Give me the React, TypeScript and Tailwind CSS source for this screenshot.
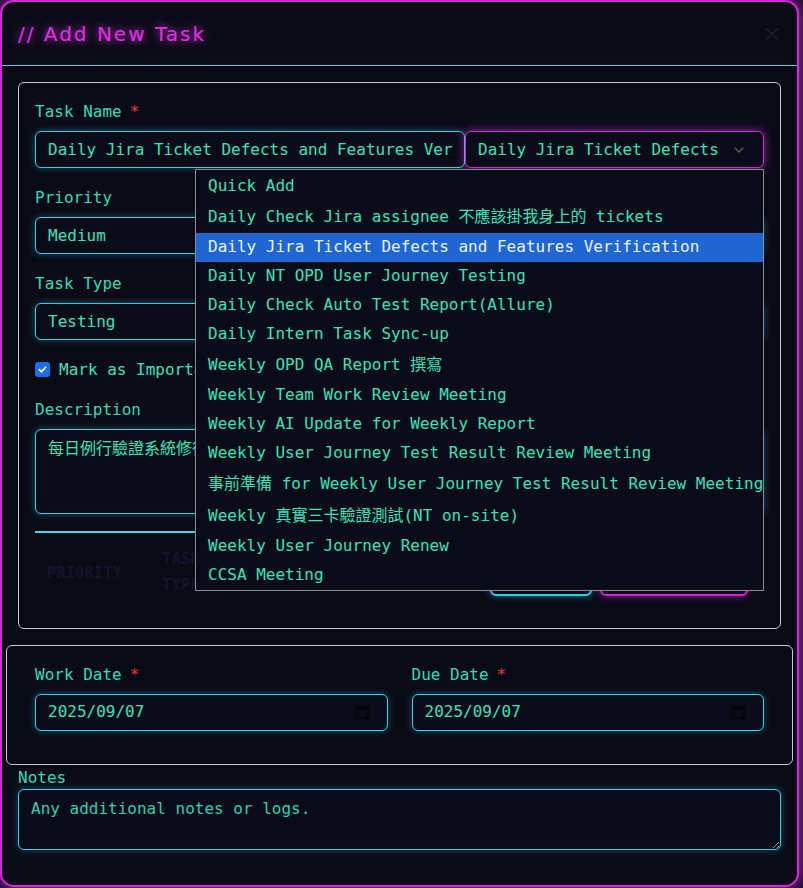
import { ChevronDown, X } from 'lucide-react';

const MONO = { fontFamily: '"DejaVu Sans Mono", "Noto Sans CJK TC", monospace' };

// Latin rows sit at 29px; rows with CJK pick up the taller fallback metrics.
const OPTIONS: { label: string; cjk?: boolean; active?: boolean }[] = [
  { label: 'Quick Add' },
  { label: 'Daily Check Jira assignee 不應該掛我身上的 tickets', cjk: true },
  { label: 'Daily Jira Ticket Defects and Features Verification', active: true },
  { label: 'Daily NT OPD User Journey Testing' },
  { label: 'Daily Check Auto Test Report(Allure)' },
  { label: 'Daily Intern Task Sync-up' },
  { label: 'Weekly OPD QA Report 撰寫', cjk: true },
  { label: 'Weekly Team Work Review Meeting' },
  { label: 'Weekly AI Update for Weekly Report' },
  { label: 'Weekly User Journey Test Result Review Meeting' },
  { label: '事前準備 for Weekly User Journey Test Result Review Meeting', cjk: true },
  { label: 'Weekly 真實三卡驗證測試(NT on-site)', cjk: true },
  { label: 'Weekly User Journey Renew' },
  { label: 'CCSA Meeting' },
];

function Label({ children, required }: { children: React.ReactNode; required?: boolean }) {
  return (
    <div className="mb-2 pt-[1px] text-[16px] leading-[23px] text-[#30dcb4]">
      {children}
      {required && <span className="ml-2 text-[#e0384c]">*</span>}
    </div>
  );
}

const field =
  'h-[37px] rounded-md border border-[#2fd2de] bg-[#0a0b18] px-[12px] text-[16px] text-[#38e3b6] shadow-[0_0_7px_rgba(34,211,238,0.35)]';

function CalendarGlyph() {
  return (
    <svg width="14" height="14" viewBox="0 0 14 14" fill="none" className="text-[#04050a]">
      <rect x="1" y="2" width="12" height="11" rx="1" stroke="currentColor" strokeWidth="1.8" />
      <rect x="1" y="2" width="12" height="3" fill="currentColor" />
    </svg>
  );
}

function DateField({ label, value }: { label: string; value: string }) {
  return (
    <div>
      <Label required>{label}</Label>
      <div className={`${field} flex items-center justify-between pr-[18px]`}>
        <span>{value}</span>
        <CalendarGlyph />
      </div>
    </div>
  );
}

function TaskOptions() {
  return (
    <div className="absolute left-[160px] right-0 top-[38px] z-10 border border-[#8a8a90] bg-[#0a0b18] pt-[1.5px]">
      {OPTIONS.map((option) => (
        <div
          key={option.label}
          className={`flex items-center whitespace-nowrap px-[12px] text-[16px] ${
            option.cjk ? 'h-[32px]' : 'h-[29px]'
          } ${option.active ? 'bg-[#1f66d2] text-[#eaf4ff]' : 'text-[#38e3b6]'}`}
        >
          {option.label}
        </div>
      ))}
    </div>
  );
}

export default function App() {
  return (
    <div className="h-[888px] w-[803px] overflow-hidden bg-[#180b2a]" style={MONO}>
      <div className="flex h-[887px] w-[799px] flex-col rounded-[14px] border-2 border-[#dc22de] bg-[#0a0a17] shadow-[0_0_14px_rgba(217,70,239,0.75)]">
        <header className="flex h-[63px] shrink-0 items-center justify-between pl-4 pr-[15px]">
          <h2
            className="text-[20px] tracking-[2px] text-[#e22ee4] [text-shadow:0_0_8px_rgba(236,72,236,0.9)]"
            style={{ fontFamily: '"DejaVu Sans", sans-serif' }}
          >
            // Add New Task
          </h2>
          <X size={20} strokeWidth={1.5} className="text-[#20202c]" />
        </header>
        <div className="h-px shrink-0 bg-[#3cd9e6]" />

        <div className="flex flex-col p-4">
          <section className="rounded-md border border-[#c9c9d2] p-4">
            <div className="mb-[17px]">
              <Label required>Task Name</Label>
              <div className="relative flex">
                <div className={`${field} flex w-[430px] shrink-0 items-center pr-[10px]`}>
                  <span className="overflow-hidden whitespace-nowrap">
                    Daily Jira Ticket Defects and Features Verification
                  </span>
                </div>
                <div className="flex h-[37px] flex-1 items-center justify-between rounded-md border border-[#d81fd8] bg-[#0a0b18] pl-[12px] pr-[16px] text-[16px] text-[#38e3b6] shadow-[0_0_10px_rgba(217,70,239,0.6)]">
                  <span>Daily Jira Ticket Defects</span>
                  <ChevronDown size={16} className="text-[#5a5a66]" />
                </div>
                <TaskOptions />
              </div>
            </div>

            <div className="mb-[17px]">
              <Label>Priority</Label>
              <div className={`${field} flex items-center justify-between pr-[16px]`}>
                <span>Medium</span>
                <ChevronDown size={16} className="text-[#5a5a66]" />
              </div>
            </div>

            <div className="mb-[17px]">
              <Label>Task Type</Label>
              <div className={`${field} flex items-center`}>Testing</div>
            </div>

            <label className="mb-[16px] flex h-6 items-center gap-[9px] pt-[1px] text-[16px] text-[#38e3b6]">
              <span className="flex h-[15px] w-[15px] items-center justify-center rounded-[3px] bg-[#1a6fe6]">
                <svg width="11" height="11" viewBox="0 0 12 12" fill="none">
                  <path d="M2.5 6.2l2.3 2.3 4.7-4.9" stroke="white" strokeWidth="1.8" strokeLinecap="round" strokeLinejoin="round" />
                </svg>
              </span>
              Mark as Important
            </label>

            <div className="mb-[17px]">
              <Label>Description</Label>
              <textarea
                readOnly
                defaultValue="每日例行驗證系統修復的缺陷與新增功能是否符合預期"
                className="block h-[85px] w-full resize-none rounded-md border border-[#2fd2de] bg-[#0a0b18] px-[12px] py-2 text-[16px] leading-[22px] text-[#38e3b6] shadow-[0_0_7px_rgba(34,211,238,0.35)] outline-none"
              />
            </div>

            <div className="h-[1.5px] bg-[#3cd9e6]" />

            <div className="mb-[14px] mt-[25px] flex items-start justify-between">
              <div className="flex gap-[40px] pl-3 text-[15px] font-bold leading-[26px] tracking-wide text-[#10142a]">
                <span className="pt-[2px]">PRIORITY</span>
                <span className="-mt-[12px] w-[44px]">TASK TYPE</span>
              </div>
              <div className="flex gap-2 pr-4">
                <button className="h-[38px] w-[102px] rounded-md border-2 border-[#22d3ee] text-[#22d3ee] shadow-[0_0_7px_rgba(34,211,238,0.5)]">
                  Cancel
                </button>
                <button className="h-[38px] w-[148px] rounded-md border-2 border-[#d81fd8] text-[#d81fd8] shadow-[0_0_7px_rgba(217,70,239,0.6)]">
                  Add Task
                </button>
              </div>
            </div>
          </section>

          <section className="-mx-3 mt-[16px] grid grid-cols-2 gap-6 rounded-md border border-[#c9c9d2] px-7 pb-[33px] pt-4">
            <DateField label="Work Date" value="2025/09/07" />
            <DateField label="Due Date" value="2025/09/07" />
          </section>

          <div className="pt-[1px] text-[16px] leading-[23px] text-[#30dcb4]">Notes</div>
          <textarea
            placeholder="Any additional notes or logs."
            className="block h-[61px] w-full rounded-md border border-[#2fd2de] bg-[#0a0b18] px-[12px] py-2 text-[16px] leading-[22px] text-[#38e3b6] shadow-[0_0_7px_rgba(34,211,238,0.35)] outline-none placeholder:text-[#2fcfae]"
          />
        </div>
      </div>
    </div>
  );
}
